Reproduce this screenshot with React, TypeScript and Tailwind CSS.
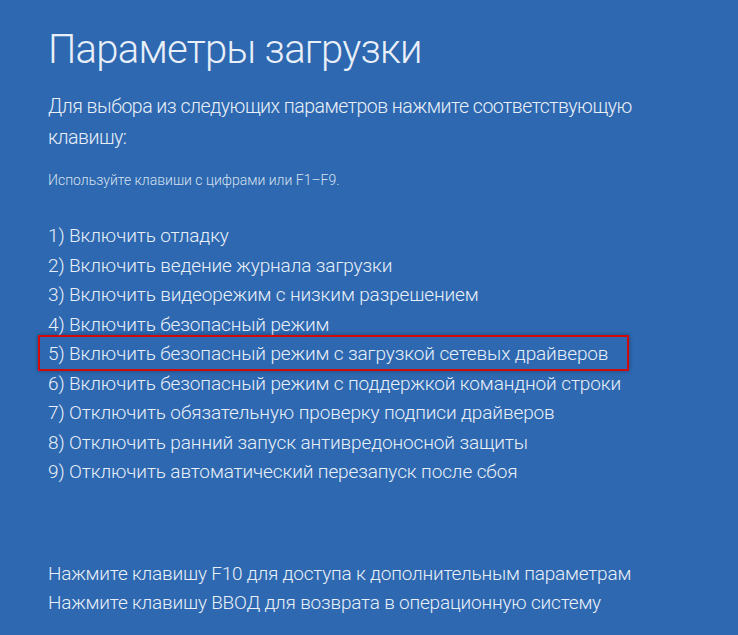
import React from "react";

const items = [
  "1) Включить отладку",
  "2) Включить ведение журнала загрузки",
  "3) Включить видеорежим с низким разрешением",
  "4) Включить безопасный режим",
  "5) Включить безопасный режим с загрузкой сетевых драйверов",
  "6) Включить безопасный режим с поддержкой командной строки",
  "7) Отключить обязательную проверку подписи драйверов",
  "8) Отключить ранний запуск антивредоносной защиты",
  "9) Отключить автоматический перезапуск после сбоя",
];

export default function App() {
  return (
    <div
      className="w-[738px] h-[635px] overflow-hidden bg-[#2d68b0] text-[#e9eff8] pl-[48px] pt-[26px]"
      style={{ fontFamily: "Roboto, 'Noto Sans', sans-serif" }}
    >
      <h1 className="text-[40px] leading-[48px] font-light tracking-[-0.75px]">Параметры загрузки</h1>
      <div className="mt-[17px] text-[19.5px] leading-[31px] font-light tracking-[-0.5px] w-[660px]">
        Для выбора из следующих параметров нажмите соответствующую клавишу:
      </div>
      <div className="mt-[17px] text-[14px] leading-[20px] font-light text-[#d6e1ef]">
        Используйте клавиши с цифрами или F1–F9.
      </div>
      <div className="mt-[31px] flex flex-col">
        {items.map((t, i) => (
          <div key={i} className="relative text-[19px] leading-[29.5px] font-light tracking-[-0.12px]">
            {i === 4 && (
              <div className="absolute left-[-10px] top-[-4px] w-[591px] h-[36px] border-2 border-[#d10a0a] shadow-[0_0_4px_rgba(0,0,0,0.35)]" />
            )}
            {t}
          </div>
        ))}
      </div>
      <div className="mt-[72px] flex flex-col text-[19px] leading-[29px] font-light tracking-[-0.2px]">
        <div>Нажмите клавишу F10 для доступа к дополнительным параметрам</div>
        <div>Нажмите клавишу ВВОД для возврата в операционную систему</div>
      </div>
    </div>
  );
}
